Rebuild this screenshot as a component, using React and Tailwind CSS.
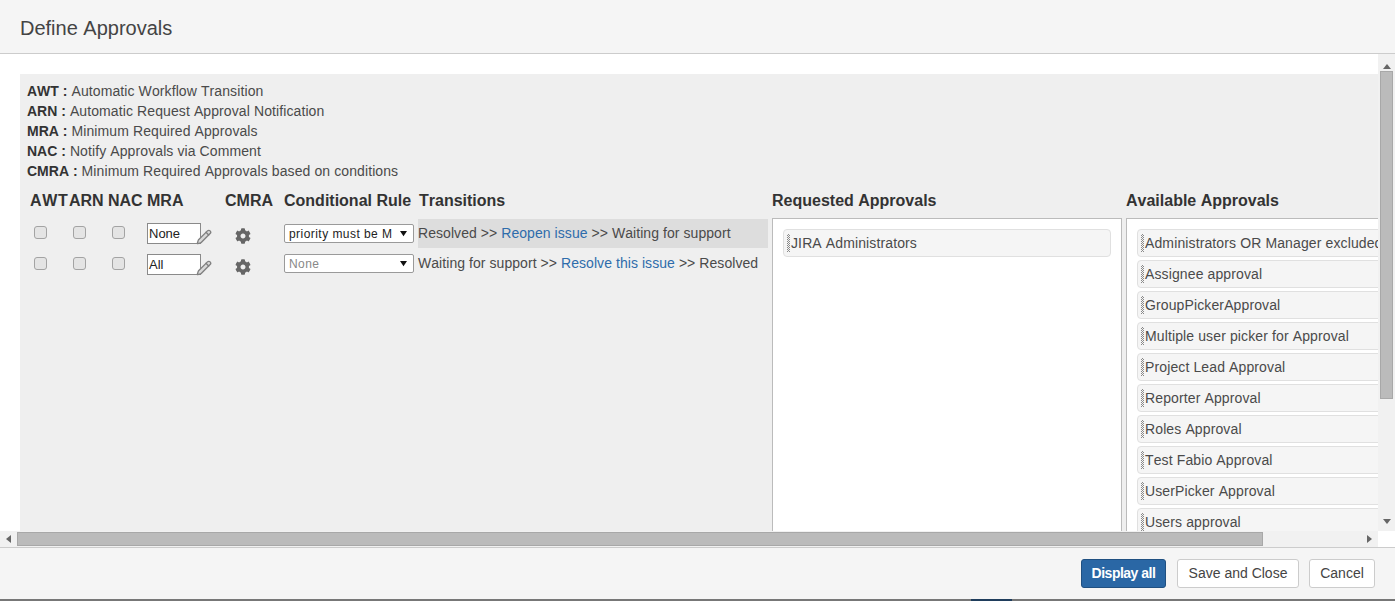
import React from 'react';
import { FaCog } from 'react-icons/fa';
import { Pencil } from 'lucide-react';

const legend = [
  ['AWT', 'Automatic Workflow Transition'],
  ['ARN', 'Automatic Request Approval Notification'],
  ['MRA', 'Minimum Required Approvals'],
  ['NAC', 'Notify Approvals via Comment'],
  ['CMRA', 'Minimum Required Approvals based on conditions'],
];

const available = [
  'Administrators OR Manager excluded',
  'Assignee approval',
  'GroupPickerApproval',
  'Multiple user picker for Approval',
  'Project Lead Approval',
  'Reporter Approval',
  'Roles Approval',
  'Test Fabio Approval',
  'UserPicker Approval',
  'Users approval',
];

const rows = [
  {
    mra: 'None',
    rule: 'priority must be M',
    ruleClass: 'text-[#222]',
    from: 'Resolved',
    link: 'Reopen issue',
    to: 'Waiting for support',
    active: true,
  },
  {
    mra: 'All',
    rule: 'None',
    ruleClass: 'text-[#888]',
    from: 'Waiting for support',
    link: 'Resolve this issue',
    to: 'Resolved',
    active: false,
  },
];

const Checkbox = () => (
  <input
    type="checkbox"
    className="w-[13px] h-[13px] appearance-none rounded-[3px] border border-[#a3a3a3] bg-[#e4e4e4] block"
  />
);

const ApprovalItem = ({ label, width }) => (
  <div className={`${width} h-[28px] mb-[3px] shrink-0 flex items-center pl-[3px] rounded-[4px] border border-[#e0e0e0] bg-[#f5f5f5] text-[14px] tracking-[0.12px] text-[#4a4a4a] whitespace-nowrap overflow-hidden`}>
    <span className="w-[3px] h-[18px] mr-[1px] shrink-0 bg-[repeating-conic-gradient(#8a8a8a_0_25%,transparent_0_50%)] bg-[length:2px_2px]" />
    <span>{label}</span>
  </div>
);

const Arrow = ({ points, box = 'w-[8px] h-[8px]', fill = '#666666' }) => (
  <svg viewBox="0 0 8 8" className={box}>
    <polygon points={points} fill={fill} />
  </svg>
);

const App = () => {
  return (
    <div className="w-[1395px] h-[601px] overflow-hidden flex flex-col bg-white text-[14px] text-[#333] [font-kerning:none] font-['Liberation_Sans',Arial,sans-serif]">
      {/* header */}
      <div className="h-[54px] shrink-0 flex items-center pl-5 pt-[3px] bg-[#f5f5f5] border-b border-[#cccccc]">
        <h1 className="text-[20px] leading-6 text-[#444]">Define Approvals</h1>
      </div>

      {/* scrolling area */}
      <div className="h-[493px] shrink-0 flex flex-col">
        <div className="h-[477px] flex">
          <div className="w-[1378px] h-full overflow-hidden pt-5 pl-5">
            <div className="h-full bg-[#efefef] pt-[7px] overflow-hidden">
              <div className="pl-[7px]">
                {legend.map(([key, text]) => (
                  <p key={key} className="h-5 leading-5 text-[14px] tracking-[0.1px] text-[#4a4a4a]">
                    <b className="text-[#333] tracking-normal">{key} :</b> {text}
                  </p>
                ))}
              </div>

              <div className="mt-[10px] pl-[10px] flex text-[16px] font-bold leading-5 text-[#333] whitespace-nowrap">
                <div className="w-[39px] tracking-[0.7px]">AWT</div>
                <div className="w-[39px]">ARN</div>
                <div className="w-[39px]">NAC</div>
                <div className="w-[78px]">MRA</div>
                <div className="w-[59px]">CMRA</div>
                <div className="w-[135px]">Conditional Rule</div>
                <div className="w-[353px]">Transitions</div>
                <div className="w-[354px]">Requested Approvals</div>
                <div>Available Approvals</div>
              </div>

              <div className="mt-[7px] flex pl-[10px]">
                <div className="w-[742px] shrink-0 pt-[1px]">
                  {rows.map((row) => (
                    <div key={row.mra} className="h-[31px] flex items-start">
                      {[0, 1, 2].map((i) => (
                        <div key={i} className="w-[39px] pl-[4px] pt-[7px]">
                          <Checkbox />
                        </div>
                      ))}
                      <div className="w-[78px] flex items-start pt-[4px]">
                        <div className="w-[54px] h-[21px] bg-white border border-[#8a8a8a] text-[13px] leading-[19px] pl-[1px] text-[#222]">
                          {row.mra}
                        </div>
                        <Pencil className="w-[16px] h-[16px] -ml-[5px] mt-[6px] text-[#808080]" fill="#d8d8d8" strokeWidth={2} />
                      </div>
                      <div className="w-[59px] pl-[10px] pt-[9px]">
                        <FaCog className="w-[16px] h-[16px] text-[#666]" />
                      </div>
                      <div className={`w-[134px] ${row.active ? 'pt-[5px]' : 'pt-[4px]'}`}>
                        <div className="w-[130px] h-[19px] flex items-center justify-between pl-[4px] pr-[6px] bg-white border border-[#9a9a9a] rounded-[2px] text-[12px] tracking-[0.45px] whitespace-nowrap overflow-hidden">
                          <span className={row.ruleClass}>{row.rule}</span>
                          <Arrow points="0,1 8,1 4,7" box="w-[7px] h-[7px] shrink-0" fill="#111111" />
                        </div>
                      </div>
                      <div className={`w-[350px] h-[29px] text-[14px] tracking-[0.06px] text-[#4a4a4a] whitespace-nowrap ${row.active ? 'leading-[29px] bg-[#dddddd]' : 'leading-[27px]'}`}>
                        {row.from} &gt;&gt; <a className="text-[#2e6cab]">{row.link}</a> &gt;&gt; {row.to}
                      </div>
                    </div>
                  ))}
                </div>

                <div className="w-[350px] h-[360px] shrink-0 bg-white border border-[#bbbbbb] pt-[10px] pl-[10px]">
                  <ApprovalItem label="JIRA Administrators" width="w-[328px]" />
                </div>

                <div className="w-[300px] h-[360px] shrink-0 ml-[4px] bg-white border border-r-0 border-[#bbbbbb] pt-[10px] pl-[10px] overflow-hidden flex flex-col">
                  {available.map((name) => (
                    <ApprovalItem key={name} label={name} width="w-[290px]" />
                  ))}
                </div>
              </div>
            </div>
          </div>

          {/* vertical scrollbar */}
          <div className="w-[17px] h-full bg-[#f1f1f1] flex flex-col items-center">
            <div className="h-[17px] flex items-end">
              <Arrow points="4,1 8,6 0,6" />
            </div>
            <div className="w-[13px] h-[328px] bg-[#bbbbbb] border border-[#a8a8a8]" />
            <div className="flex-1 w-full flex items-end justify-center pb-[6px]">
              <Arrow points="0,2 8,2 4,7" />
            </div>
          </div>
        </div>

        {/* horizontal scrollbar */}
        <div className="h-[16px] flex">
          <div className="w-[1378px] h-full bg-[#f1f1f1] flex items-center">
            <div className="w-[17px] flex justify-center">
              <Arrow points="6,0 6,8 1,4" />
            </div>
            <div className="w-[1246px] h-[14px] bg-[#bbbbbb] border border-[#a8a8a8]" />
            <div className="flex-1 flex justify-end pr-[5px]">
              <Arrow points="2,0 2,8 7,4" />
            </div>
          </div>
          <div className="w-[17px] bg-white" />
        </div>
      </div>

      {/* footer */}
      <div className="h-[52px] shrink-0 flex items-start justify-end gap-[10px] pr-5 pt-[11px] bg-[#f5f5f5] border-t border-[#cccccc]">
        <button className="w-[85px] h-[29px] mr-[1px] rounded-[3px] border border-[#205081] bg-[#2a67a5] text-[14px] font-bold tracking-[-0.5px] text-white">
          Display all
        </button>
        <button className="w-[122px] h-[29px] rounded-[3px] border border-[#cccccc] bg-white text-[14px] text-[#444]">
          Save and Close
        </button>
        <button className="w-[66px] h-[29px] rounded-[3px] border border-[#cccccc] bg-white text-[14px] text-[#444]">
          Cancel
        </button>
      </div>
      <div className="flex-1 bg-[#777777] pl-[971px]">
        <div className="w-[41px] h-full bg-[#1f3d5c]" />
      </div>
    </div>
  );
};

export default App;
